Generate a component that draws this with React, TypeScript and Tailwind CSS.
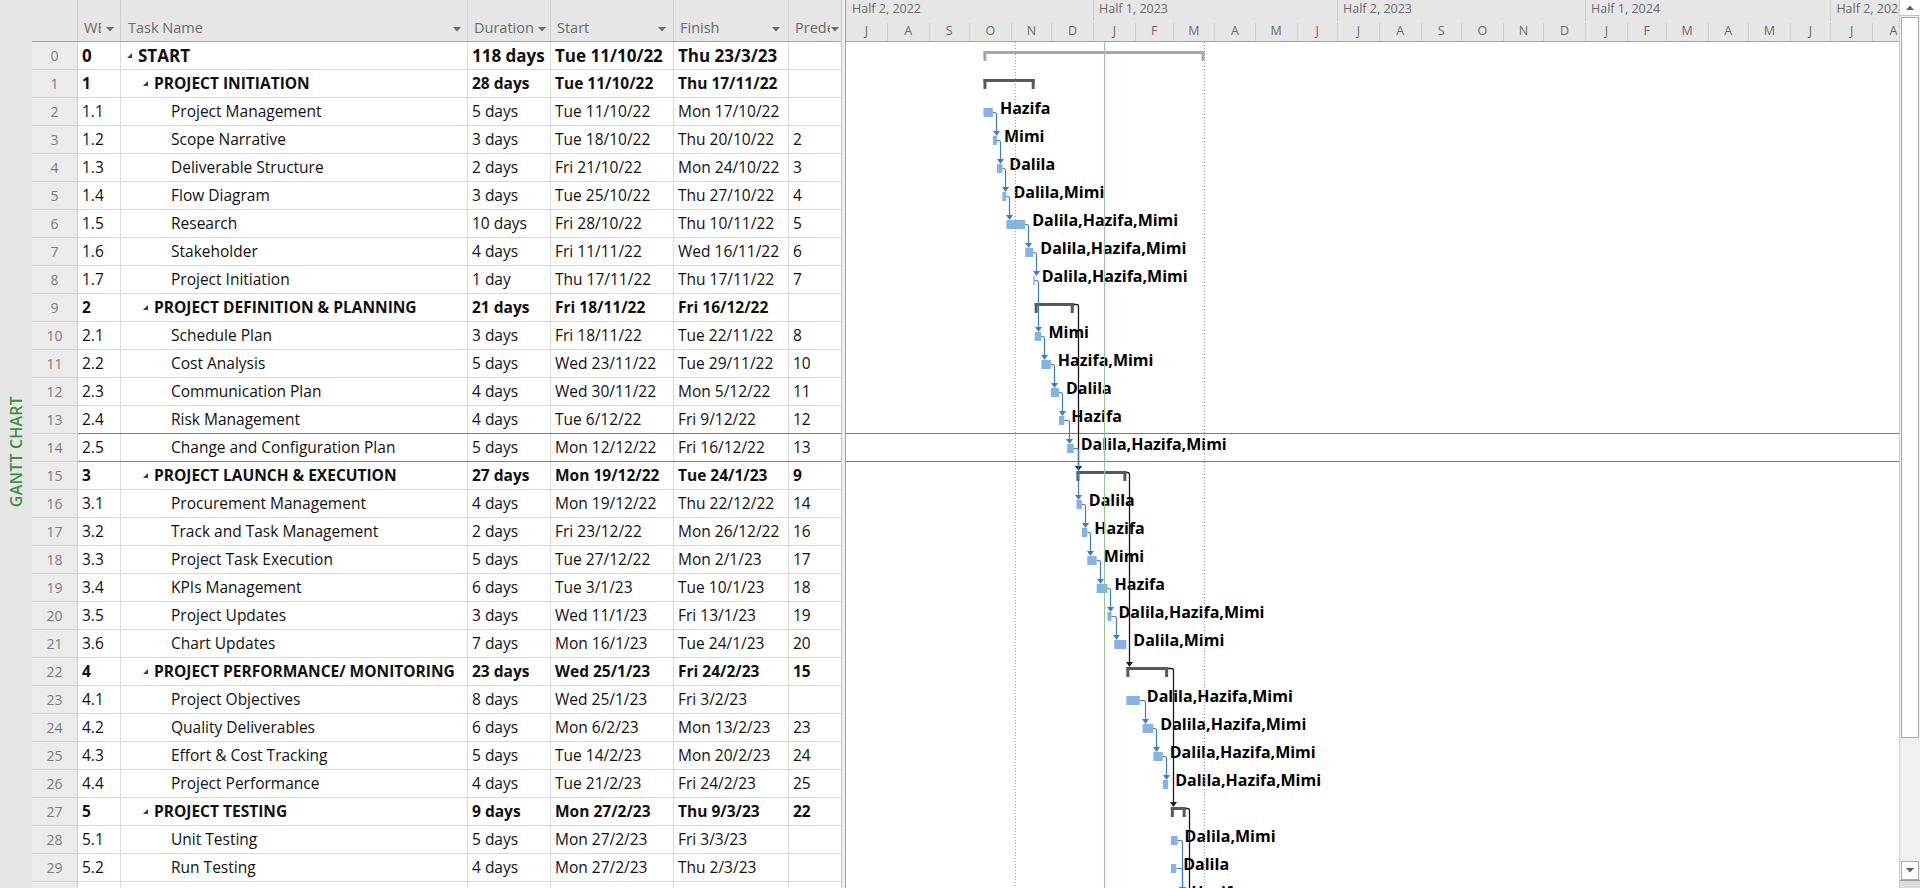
import React from "react";

type Task = {
  id: number;
  wbs: string;
  name: string;
  dur: string;
  start: string;
  finish: string;
  pred: string;
  level: number;
  summary?: boolean;
  res?: string;
};

const tasks: Task[] = [
  { id: 0, wbs: "0", name: "START", dur: "118 days", start: "Tue 11/10/22", finish: "Thu 23/3/23", pred: "", level: 0, summary: true },
  { id: 1, wbs: "1", name: "PROJECT INITIATION", dur: "28 days", start: "Tue 11/10/22", finish: "Thu 17/11/22", pred: "", level: 1, summary: true },
  { id: 2, wbs: "1.1", name: "Project Management", dur: "5 days", start: "Tue 11/10/22", finish: "Mon 17/10/22", pred: "", level: 2, res: "Hazifa" },
  { id: 3, wbs: "1.2", name: "Scope Narrative", dur: "3 days", start: "Tue 18/10/22", finish: "Thu 20/10/22", pred: "2", level: 2, res: "Mimi" },
  { id: 4, wbs: "1.3", name: "Deliverable Structure", dur: "2 days", start: "Fri 21/10/22", finish: "Mon 24/10/22", pred: "3", level: 2, res: "Dalila" },
  { id: 5, wbs: "1.4", name: "Flow Diagram", dur: "3 days", start: "Tue 25/10/22", finish: "Thu 27/10/22", pred: "4", level: 2, res: "Dalila,Mimi" },
  { id: 6, wbs: "1.5", name: "Research", dur: "10 days", start: "Fri 28/10/22", finish: "Thu 10/11/22", pred: "5", level: 2, res: "Dalila,Hazifa,Mimi" },
  { id: 7, wbs: "1.6", name: "Stakeholder", dur: "4 days", start: "Fri 11/11/22", finish: "Wed 16/11/22", pred: "6", level: 2, res: "Dalila,Hazifa,Mimi" },
  { id: 8, wbs: "1.7", name: "Project Initiation", dur: "1 day", start: "Thu 17/11/22", finish: "Thu 17/11/22", pred: "7", level: 2, res: "Dalila,Hazifa,Mimi" },
  { id: 9, wbs: "2", name: "PROJECT DEFINITION & PLANNING", dur: "21 days", start: "Fri 18/11/22", finish: "Fri 16/12/22", pred: "", level: 1, summary: true },
  { id: 10, wbs: "2.1", name: "Schedule Plan", dur: "3 days", start: "Fri 18/11/22", finish: "Tue 22/11/22", pred: "8", level: 2, res: "Mimi" },
  { id: 11, wbs: "2.2", name: "Cost Analysis", dur: "5 days", start: "Wed 23/11/22", finish: "Tue 29/11/22", pred: "10", level: 2, res: "Hazifa,Mimi" },
  { id: 12, wbs: "2.3", name: "Communication Plan", dur: "4 days", start: "Wed 30/11/22", finish: "Mon 5/12/22", pred: "11", level: 2, res: "Dalila" },
  { id: 13, wbs: "2.4", name: "Risk Management", dur: "4 days", start: "Tue 6/12/22", finish: "Fri 9/12/22", pred: "12", level: 2, res: "Hazifa" },
  { id: 14, wbs: "2.5", name: "Change and Configuration Plan", dur: "5 days", start: "Mon 12/12/22", finish: "Fri 16/12/22", pred: "13", level: 2, res: "Dalila,Hazifa,Mimi" },
  { id: 15, wbs: "3", name: "PROJECT LAUNCH & EXECUTION", dur: "27 days", start: "Mon 19/12/22", finish: "Tue 24/1/23", pred: "9", level: 1, summary: true },
  { id: 16, wbs: "3.1", name: "Procurement Management", dur: "4 days", start: "Mon 19/12/22", finish: "Thu 22/12/22", pred: "14", level: 2, res: "Dalila" },
  { id: 17, wbs: "3.2", name: "Track and Task Management", dur: "2 days", start: "Fri 23/12/22", finish: "Mon 26/12/22", pred: "16", level: 2, res: "Hazifa" },
  { id: 18, wbs: "3.3", name: "Project Task Execution", dur: "5 days", start: "Tue 27/12/22", finish: "Mon 2/1/23", pred: "17", level: 2, res: "Mimi" },
  { id: 19, wbs: "3.4", name: "KPIs Management", dur: "6 days", start: "Tue 3/1/23", finish: "Tue 10/1/23", pred: "18", level: 2, res: "Hazifa" },
  { id: 20, wbs: "3.5", name: "Project Updates", dur: "3 days", start: "Wed 11/1/23", finish: "Fri 13/1/23", pred: "19", level: 2, res: "Dalila,Hazifa,Mimi" },
  { id: 21, wbs: "3.6", name: "Chart Updates", dur: "7 days", start: "Mon 16/1/23", finish: "Tue 24/1/23", pred: "20", level: 2, res: "Dalila,Mimi" },
  { id: 22, wbs: "4", name: "PROJECT PERFORMANCE/ MONITORING", dur: "23 days", start: "Wed 25/1/23", finish: "Fri 24/2/23", pred: "15", level: 1, summary: true },
  { id: 23, wbs: "4.1", name: "Project Objectives", dur: "8 days", start: "Wed 25/1/23", finish: "Fri 3/2/23", pred: "", level: 2, res: "Dalila,Hazifa,Mimi" },
  { id: 24, wbs: "4.2", name: "Quality Deliverables", dur: "6 days", start: "Mon 6/2/23", finish: "Mon 13/2/23", pred: "23", level: 2, res: "Dalila,Hazifa,Mimi" },
  { id: 25, wbs: "4.3", name: "Effort & Cost Tracking", dur: "5 days", start: "Tue 14/2/23", finish: "Mon 20/2/23", pred: "24", level: 2, res: "Dalila,Hazifa,Mimi" },
  { id: 26, wbs: "4.4", name: "Project Performance", dur: "4 days", start: "Tue 21/2/23", finish: "Fri 24/2/23", pred: "25", level: 2, res: "Dalila,Hazifa,Mimi" },
  { id: 27, wbs: "5", name: "PROJECT TESTING", dur: "9 days", start: "Mon 27/2/23", finish: "Thu 9/3/23", pred: "22", level: 1, summary: true },
  { id: 28, wbs: "5.1", name: "Unit Testing", dur: "5 days", start: "Mon 27/2/23", finish: "Fri 3/3/23", pred: "", level: 2, res: "Dalila,Mimi" },
  { id: 29, wbs: "5.2", name: "Run Testing", dur: "4 days", start: "Mon 27/2/23", finish: "Thu 2/3/23", pred: "", level: 2, res: "Dalila" },
];

// rows below the fold, only their tops / links show in the chart
const hiddenTasks: Task[] = [
  { id: 30, wbs: "5.3", name: "", dur: "", start: "Mon 6/3/23", finish: "Wed 8/3/23", pred: "28,29", level: 2, res: "Hazifa" },
  { id: 31, wbs: "6", name: "", dur: "", start: "Fri 10/3/23", finish: "Thu 23/3/23", pred: "27", level: 1, summary: true },
];

const ROW_H = 28;
const PX_DAY = 1.348;
const JAN_2023 = 248; // x of 1 Jan 2023 inside the chart

function dayNum(label: string) {
  const [dd, mm, yy] = label.split(" ")[1].split("/").map(Number);
  return (Date.UTC(2000 + yy, mm - 1, dd) - Date.UTC(2023, 0, 1)) / 86400000;
}
const xAt = (d: number) => JAN_2023 + d * PX_DAY;

const MONTH_LETTERS = ["J", "F", "M", "A", "M", "J", "J", "A", "S", "O", "N", "D"];
const months = Array.from({ length: 26 }, (_, i) => {
  const y = 2022 + Math.floor((6 + i) / 12);
  const m = (6 + i) % 12;
  const days = new Date(Date.UTC(y, m + 1, 0)).getUTCDate();
  return { key: `${y}-${m}`, letter: MONTH_LETTERS[m], width: days * PX_DAY };
});
const halves = [0, 1, 2, 3, 4].map((h) => {
  const slice = months.slice(h * 6, h * 6 + 6);
  const year = 2022 + Math.floor((h + 1) / 2);
  return {
    label: `Half ${h % 2 === 0 ? 2 : 1}, ${year}`,
    width: slice.reduce((a, b) => a + b.width, 0),
  };
});

function DropArrow() {
  return (
    <svg width="8" height="5" viewBox="0 0 8 5" className="shrink-0">
      <polygon points="0,0 8,0 4,4.5" fill="#6b6b6b" />
    </svg>
  );
}

function Collapse() {
  return (
    <svg width="5" height="5" viewBox="0 0 5 5" className="mr-[6px] shrink-0">
      <polygon points="5,0 5,5 0,5" fill="#3a3a3a" />
    </svg>
  );
}

const indent: Record<number, string> = {
  0: "pl-[6px]",
  1: "pl-[22px]",
  2: "pl-[50px]",
};

function TableRow({ t }: { t?: Task }) {
  const sel = t && (t.id === 13 || t.id === 14);
  const weight = t?.summary ? "font-bold" : "font-normal";
  const size = t?.id === 0 ? "text-[17px]" : "text-[15.5px]";
  return (
    <div className="flex h-[28px] shrink-0">
      <div className="flex w-[46px] shrink-0 items-center justify-center border-r border-b border-[#cfcfcf] bg-[#ebebeb] text-[14px] text-[#7c7c7c]">
        {t?.id}
      </div>
      <div
        className={`flex flex-1 border-b ${sel ? "border-[#7f7f7f]" : "border-[#dadada]"} ${size} ${weight} text-[#111]`}
      >
        <div className="flex w-[43px] shrink-0 items-center border-r border-[#dadada] pl-[4px]">{t?.wbs}</div>
        <div className={`flex w-[347px] shrink-0 items-center overflow-hidden whitespace-nowrap border-r border-[#dadada] ${t ? indent[t.level] : ""}`}>
          {t?.summary && <Collapse />}
          {t?.name}
        </div>
        <div className="flex w-[83px] shrink-0 items-center whitespace-nowrap border-r border-[#dadada] pl-[4px]">{t?.dur}</div>
        <div className="flex w-[123px] shrink-0 items-center whitespace-nowrap border-r border-[#dadada] pl-[4px]">{t?.start}</div>
        <div className="flex w-[115px] shrink-0 items-center whitespace-nowrap border-r border-[#dadada] pl-[4px]">{t?.finish}</div>
        <div className="flex w-[52px] shrink-0 items-center whitespace-nowrap pl-[4px]">{t?.pred}</div>
      </div>
    </div>
  );
}

function TaskTable() {
  return (
    <div className="flex w-[809px] shrink-0 flex-col">
      <div className="flex h-[42px] shrink-0 border-b border-[#a3a3a3] bg-[#e6e6e6] text-[14.5px] text-[#6b6b6b]">
        <div className="w-[46px] shrink-0 border-r border-[#cfcfcf]" />
        <div className="flex w-[43px] shrink-0 items-end border-r border-[#d2d2d2] pb-[2px] pl-[6px]">
          <span className="w-[17px] overflow-hidden whitespace-nowrap">WBS</span>
          <span className="mb-[7px] ml-[5px]"><DropArrow /></span>
        </div>
        <div className="flex w-[347px] shrink-0 items-end justify-between border-r border-[#d2d2d2] pb-[2px] pl-[7px] pr-[6px]">
          <span>Task Name</span>
          <span className="mb-[7px]"><DropArrow /></span>
        </div>
        <div className="flex w-[83px] shrink-0 items-end border-r border-[#d2d2d2] pb-[2px] pl-[6px]">
          <span>Duration</span>
          <span className="mb-[7px] ml-[4px]"><DropArrow /></span>
        </div>
        <div className="flex w-[123px] shrink-0 items-end justify-between border-r border-[#d2d2d2] pb-[2px] pl-[6px] pr-[7px]">
          <span>Start</span>
          <span className="mb-[7px]"><DropArrow /></span>
        </div>
        <div className="flex w-[115px] shrink-0 items-end justify-between border-r border-[#d2d2d2] pb-[2px] pl-[6px] pr-[8px]">
          <span>Finish</span>
          <span className="mb-[7px]"><DropArrow /></span>
        </div>
        <div className="flex w-[52px] shrink-0 items-end pb-[2px] pl-[6px]">
          <span className="w-[35px] overflow-hidden whitespace-nowrap">Predecessors</span>
          <span className="mb-[7px] ml-[1px]"><DropArrow /></span>
        </div>
      </div>
      {tasks.map((t) => (
        <TableRow key={t.id} t={t} />
      ))}
      <TableRow />
    </div>
  );
}

function Timescale() {
  return (
    <div className="flex h-[42px] shrink-0 flex-col overflow-hidden border-b border-[#a3a3a3] bg-[#e6e6e6] text-[12.5px] text-[#6b6b6b]">
      <div className="flex h-[21px] shrink-0">
        {halves.map((h, i) => (
          <div
            key={h.label}
            className={`shrink-0 whitespace-nowrap border-r border-[#cdcdcd] pt-[1px] leading-[16px] ${i === 0 ? "pl-[6px]" : "pl-[5px]"}`}
            style={{ width: h.width }}
          >
            {h.label}
          </div>
        ))}
      </div>
      <div className="flex flex-1">
        {months.map((m) => (
          <div
            key={m.key}
            className="mt-[2px] shrink-0 border-r border-[#cdcdcd] text-center leading-[16px]"
            style={{ width: m.width }}
          >
            {m.letter}
          </div>
        ))}
      </div>
    </div>
  );
}

function GanttBody() {
  const all = [...tasks, ...hiddenTasks];
  const geo: Record<number, { s: number; e: number; top: number; t: Task }> = {};
  all.forEach((t) => {
    geo[t.id] = { s: xAt(dayNum(t.start)), e: xAt(dayNum(t.finish) + 1), top: t.id * ROW_H, t };
  });

  const links: { from: number; to: number }[] = [];
  all.forEach((t) => {
    if (t.pred) t.pred.split(",").forEach((p) => links.push({ from: Number(p), to: t.id }));
  });

  return (
    <div className="relative flex-1 overflow-hidden">
      <svg className="absolute left-0 top-0" width="1053" height="900">
        {all.map((t) => {
          const g = geo[t.id];
          if (t.summary) {
            const fill = t.id === 0 ? "#a8a8a8" : "#595959";
            return (
              <g key={t.id} fill={fill}>
                <rect x={g.s} y={g.top + 9} width={g.e - g.s} height={3} />
                <rect x={g.s} y={g.top + 9} width={3} height={10} />
                <rect x={g.e - 3} y={g.top + 9} width={3} height={10} />
              </g>
            );
          }
          return (
            <rect key={t.id} x={g.s} y={g.top + 10} width={Math.max(g.e - g.s, 1.5)} height={9} fill="#86b3e4" />
          );
        })}
      </svg>

      {all
        .filter((t) => t.res)
        .map((t) => (
          <div
            key={t.id}
            className="absolute whitespace-nowrap text-[16px] font-bold leading-[24px] text-black"
            style={{ left: geo[t.id].e + 7, top: geo[t.id].top - 2 }}
          >
            {t.res}
          </div>
        ))}

      <svg className="pointer-events-none absolute left-0 top-0" width="1053" height="900">
        <line x1="0" x2="1053" y1="391.5" y2="391.5" stroke="#7a7a7a" />
        <line x1="0" x2="1053" y1="419.5" y2="419.5" stroke="#7a7a7a" />
        <line x1="169.5" x2="169.5" y1="0" y2="900" stroke="#9c9c9c" strokeDasharray="1 2" />
        <line x1="358.5" x2="358.5" y1="0" y2="900" stroke="#9c9c9c" strokeDasharray="1 2" />
        <line x1="258.5" x2="258.5" y1="0" y2="900" stroke="#97c497" />
        {links.map(({ from, to }) => {
          const p = geo[from];
          const q = geo[to];
          const black = p.t.summary;
          const color = black ? "#1a1a1a" : "#3f7fc1";
          const y0 = p.top + (black ? 10.5 : 14.5);
          const xa = Math.round(Math.max(p.e + 3, q.s + 2)) + 0.5;
          const tip = q.top + (q.t.summary ? 9 : 10);
          return (
            <g key={`${from}-${to}`}>
              <path
                d={`M ${p.e} ${y0} H ${xa - 2} Q ${xa} ${y0} ${xa} ${y0 + 2} V ${tip - 4}`}
                fill="none"
                stroke={color}
                strokeWidth={black ? 1.3 : 1.2}
              />
              <polygon points={`${xa - 3.5},${tip - 5} ${xa + 3.5},${tip - 5} ${xa},${tip}`} fill={color} />
            </g>
          );
        })}
      </svg>
    </div>
  );
}

function ScrollBar() {
  return (
    <div className="flex w-[21px] shrink-0 flex-col border-l border-[#cfcfcf] bg-[#f0f0f0]">
      <div className="flex h-[16px] shrink-0 items-center justify-center border-b border-[#c4c4c4] bg-white">
        <svg width="8" height="5" viewBox="0 0 8 5">
          <polygon points="0,5 8,5 4,0.5" fill="#606060" />
        </svg>
      </div>
      <div className="mx-[1px] mt-[1px] h-[721px] shrink-0 border border-[#a9a9a9] bg-white" />
      <div className="flex-1" />
      <div className="mx-[1px] flex h-[19px] shrink-0 items-center justify-center border border-[#ababab] bg-white">
        <svg width="8" height="5" viewBox="0 0 8 5">
          <polygon points="0,0 8,0 4,4.5" fill="#606060" />
        </svg>
      </div>
      <div className="h-[8px] shrink-0 border-t border-[#9c9c9c] bg-[#dcdcdc]" />
    </div>
  );
}

export default function App() {
  return (
    <div className="flex h-[888px] w-[1920px] overflow-hidden bg-white font-['Open_Sans',sans-serif]">
      <div className="flex w-[32px] shrink-0 items-center justify-center bg-[#e6e6e6] pt-[16px]">
        <span className="rotate-180 whitespace-nowrap text-[16px] font-semibold tracking-[0.2px] text-[#3f903f] [writing-mode:vertical-rl]">
          GANTT CHART
        </span>
      </div>
      <TaskTable />
      <div className="w-[5px] shrink-0 border-l border-r border-l-[#c6c6c6] border-r-[#a3a3a3] bg-[#efefef]" />
      <div className="flex w-[1053px] shrink-0 flex-col">
        <Timescale />
        <GanttBody />
      </div>
      <ScrollBar />
    </div>
  );
}
